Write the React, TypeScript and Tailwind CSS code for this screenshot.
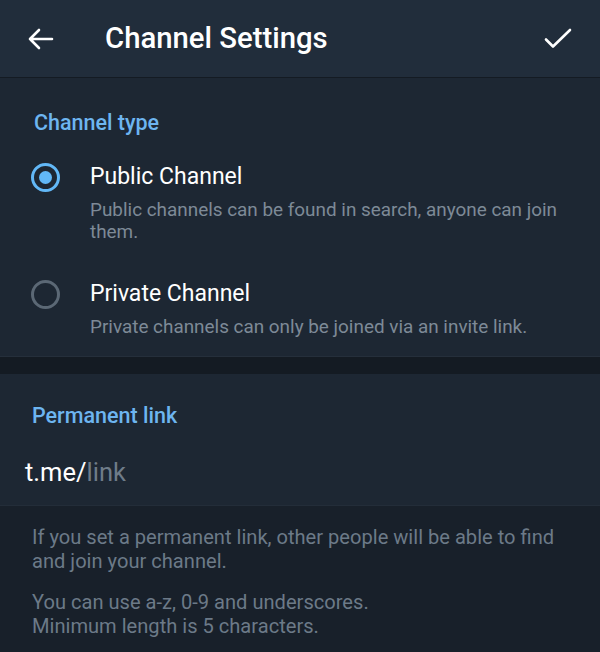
import React, { useState } from 'react';

const font = { fontFamily: 'Roboto, "Noto Sans", sans-serif' };

const BackIcon = () => (
  <svg width="26" height="22" viewBox="0 0 26 22" fill="none" stroke="white" strokeWidth="2.6" strokeLinecap="round" strokeLinejoin="round">
    <path d="M2 11h22M11 2 2 11l9 9" />
  </svg>
);

const CheckIcon = () => (
  <svg width="28" height="22" viewBox="0 0 28 22" fill="none" stroke="white" strokeWidth="2.6" strokeLinecap="round" strokeLinejoin="round">
    <path d="M2 11.5 9 18.5 26 2" />
  </svg>
);

interface RadioRowProps {
  title: string;
  desc: string;
  checked: boolean;
  onClick: () => void;
}

const RadioRow: React.FC<RadioRowProps> = ({ title, desc, checked, onClick }) => (
  <div className="flex items-start cursor-pointer" onClick={onClick}>
    <div className="w-[90px] pl-[31px] shrink-0">
      <div className={`w-[29px] h-[29px] rounded-full border-[3px] flex items-center justify-center ${checked ? 'border-[#62b8f7]' : 'border-[#5b6875]'}`}>
        {checked && <div className="w-[13px] h-[13px] rounded-full bg-[#62b8f7]" />}
      </div>
    </div>
    <div className="pr-[30px]">
      <p className="text-[23px] leading-[28px] text-white">{title}</p>
      <p className="text-[18.9px] leading-[22px] text-[#7d8a97] mt-[8px]">{desc}</p>
    </div>
  </div>
);

const App: React.FC = () => {
  const [type, setType] = useState<'public' | 'private'>('public');

  return (
    <div className="w-[600px] h-[652px] bg-[#18202a] overflow-hidden" style={font}>
      <div className="h-[78px] bg-[#212d3b] flex items-center border-b border-[#141b23]">
        <div className="w-[105px] pl-[28px]"><BackIcon /></div>
        <h1 className="flex-1 text-[29.3px] font-medium text-white">Channel Settings</h1>
        <div className="pr-[28px]"><CheckIcon /></div>
      </div>

      <div className="bg-[#1d2733] pt-[32px] pb-[18px]">
        <h2 className="pl-[34px] text-[21.5px] leading-[26px] font-medium text-[#6db5f0]">Channel type</h2>
        <div className="mt-[27px] space-y-[37px]">
          <RadioRow
            title="Public Channel"
            desc="Public channels can be found in search, anyone can join them."
            checked={type === 'public'}
            onClick={() => setType('public')}
          />
          <RadioRow
            title="Private Channel"
            desc="Private channels can only be joined via an invite link."
            checked={type === 'private'}
            onClick={() => setType('private')}
          />
        </div>
      </div>

      <div className="h-[18px] bg-[#141b23] border-t border-[#252f3b]" />

      <div className="bg-[#1d2733] pt-[29px] h-[132px] border-b border-[#232d39]">
        <h2 className="pl-[32px] text-[21.5px] leading-[26px] font-medium text-[#6db5f0]">Permanent link</h2>
        <div className="pl-[25px] mt-[28px] text-[25.5px] leading-[30px]">
          <span className="text-white">t.me/</span>
          <span className="text-[#6f7c89]">link</span>
        </div>
      </div>

      <div className="px-[32px] pt-[19px] text-[20.1px] leading-[24px] text-[#6c7a88]">
        <p>If you set a permanent link, other people will be able to find and join your channel.</p>
        <p className="mt-[17px]">You can use a-z, 0-9 and underscores.<br />Minimum length is 5 characters.</p>
      </div>
    </div>
  );
};

export default App;
